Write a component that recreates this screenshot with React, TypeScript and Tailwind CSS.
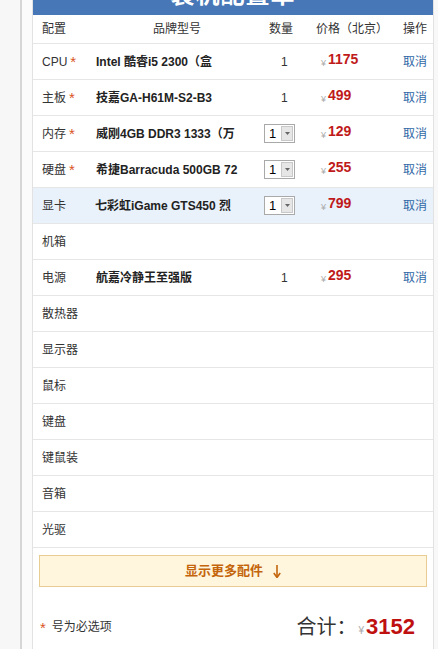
import React from 'react';

type Part = {
  label: string;
  required?: boolean;
  name?: string;
  qty?: 'text' | 'select';
  price?: string;
  active?: boolean;
};

const PARTS: Part[] = [
  { label: 'CPU', required: true, name: 'Intel 酷睿i5 2300（盒', qty: 'text', price: '1175' },
  { label: '主板', required: true, name: '技嘉GA-H61M-S2-B3', qty: 'text', price: '499' },
  { label: '内存', required: true, name: '威刚4GB DDR3 1333（万', qty: 'select', price: '129' },
  { label: '硬盘', required: true, name: '希捷Barracuda 500GB 72', qty: 'select', price: '255' },
  { label: '显卡', name: '七彩虹iGame GTS450 烈', qty: 'select', price: '799', active: true },
  { label: '机箱' },
  { label: '电源', name: '航嘉冷静王至强版', qty: 'text', price: '295' },
  { label: '散热器' },
  { label: '显示器' },
  { label: '鼠标' },
  { label: '键盘' },
  { label: '键鼠装' },
  { label: '音箱' },
  { label: '光驱' },
];

function QtySelect() {
  return (
    <div className="flex items-center h-[19px] w-[31px] border border-[#a9a9a9] bg-white">
      <span className="flex-1 pl-[4px] text-[13px] leading-none text-black">1</span>
      <span className="w-[12px] h-[15px] mr-[1px] border border-[#c8c8c8] bg-[#e6e6e6] flex items-center justify-center">
        <svg width="5" height="3" viewBox="0 0 5 3">
          <path d="M0 0 L5 0 L2.5 3 Z" fill="#666" />
        </svg>
      </span>
    </div>
  );
}

export default function App() {
  return (
    <div
      className="flex w-[438px] h-[649px] overflow-hidden bg-[#f8f8f8]"
      style={{ fontFamily: '"Liberation Sans", Arial, "Noto Sans CJK SC", sans-serif' }}
    >
      <div className="w-[20px] shrink-0 bg-[#f7f7f7]" />
      <div className="w-[2px] shrink-0 bg-[#d6d6d6]" />
      <div className="w-[10px] shrink-0 bg-[#fbfbfb]" />

      {/* card */}
      <div className="w-[402px] shrink-0 flex flex-col bg-white border-l border-r border-[#e2e2e2]">
        <div className="-mt-[25px] h-[40px] shrink-0 bg-[#4777b6] flex items-center justify-center">
          <span className="text-white text-[24px] font-bold leading-[40px] tracking-[1px]">装机配置单</span>
        </div>

        {/* header row */}
        <div className="flex items-center h-[29px] border-b border-[#e6e6e6] text-[12px] text-[#333]">
          <span className="w-[62px] pl-[9px]">配置</span>
          <span className="w-[164px] text-center">品牌型号</span>
          <span className="w-[56px] pl-[10px]">数量</span>
          <span className="w-[88px] pl-[1px]">价格（北京）</span>
          <span className="flex-1">操作</span>
        </div>

        {PARTS.map(p => (
          <div
            key={p.label}
            className={`flex items-center h-[36px] shrink-0 border-b border-[#e6e6e6] text-[12px] ${p.active ? 'bg-[#e9f1fa]' : ''}`}
          >
            <span className="w-[62px] pl-[9px] text-[#333] whitespace-nowrap">
              {p.label}
              {p.required && <span className="text-[#d9541e] text-[15px] ml-[3px] relative top-[1px]">*</span>}
            </span>
            <span className={`w-[164px] overflow-hidden whitespace-nowrap font-bold text-[#222] ${p.active ? 'pl-0' : 'pl-[1px]'}`}>
              {p.name ?? ''}
            </span>
            <span className="w-[56px] flex justify-start">
              {p.qty === 'text' && <span className="pl-[22px] text-[#333]">1</span>}
              {p.qty === 'select' && <span className="pl-[5px]"><QtySelect /></span>}
            </span>
            <span className="w-[88px] pl-[6px] whitespace-nowrap">
              {p.price && (
                <>
                  <span className="text-[9px] text-[#aaa] mr-[2px]">¥</span>
                  <span className="text-[14px] font-bold text-[#bf1a1a] relative -top-[2px]">{p.price}</span>
                </>
              )}
            </span>
            <span className="flex-1 text-[#2f68a6]">{p.price ? '取消' : ''}</span>
          </div>
        ))}

        <div className="px-[6px] pt-[7px]">
          <div className="h-[32px] bg-[#fff6dd] border border-[#e8cd92] flex items-center justify-center gap-[10px] text-[13px] font-bold text-[#c4650c]">
            <span>显示更多配件</span>
            <svg width="8" height="13" viewBox="0 0 8 13">
              <path d="M4 0 V11" stroke="#c4650c" strokeWidth="1.6" />
              <path d="M0.8 8 L4 12.5 L7.2 8" stroke="#c4650c" strokeWidth="1.6" fill="none" />
            </svg>
          </div>
        </div>

        <div className="flex items-center justify-between pl-[7px] pr-[18px] mt-[23px]">
          <span className="text-[12px] text-[#333] flex items-center">
            <span className="text-[#d9541e] text-[15px] mr-[6px] relative top-[2px]">*</span>
            号为必选项
          </span>
          <span className="flex items-baseline">
            <span className="text-[20px] text-[#333]">合计：</span>
            <span className="text-[10px] text-[#aaa] ml-[2px] mr-[2px]">¥</span>
            <span className="text-[22px] font-bold text-[#bf1010]">3152</span>
          </span>
        </div>
      </div>
    </div>
  );
}
